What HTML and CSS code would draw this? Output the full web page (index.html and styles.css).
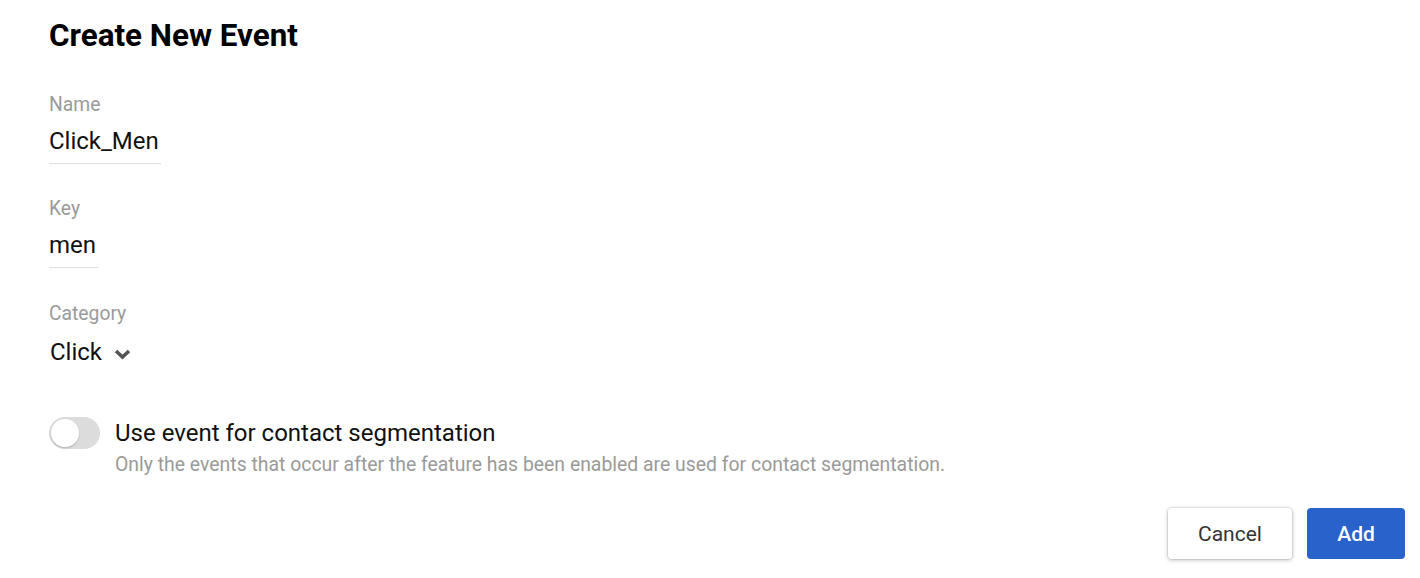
FILE: index.html
```html
<!DOCTYPE html>
<html>
<head>
<meta charset="utf-8">
<link rel="stylesheet" href="styles.css">
</head>
<body>
<div class="dialog">
  <h1 class="title">Create New Event</h1>
  <div class="field">
    <div class="label">Name</div>
    <div class="value underline">Click_Men</div>
  </div>
  <div class="field">
    <div class="label">Key</div>
    <div class="value underline">men</div>
  </div>
  <div class="field field-cat">
    <div class="label">Category</div>
    <div class="select">
      <span class="select-text">Click</span>
      <svg class="chev" width="17" height="12" viewBox="0 0 17 12"><path d="M2 3 L8.5 9 L15 3" fill="none" stroke="#555" stroke-width="3.6"/></svg>
    </div>
  </div>
  <div class="toggle-row">
    <div class="switch"><div class="knob"></div></div>
    <div class="toggle-text">
      <div class="toggle-label">Use event for contact segmentation</div>
      <div class="toggle-help">Only the events that occur after the feature has been enabled are used for contact segmentation.</div>
    </div>
  </div>
  <div class="actions">
    <button class="btn btn-cancel">Cancel</button>
    <button class="btn btn-add">Add</button>
  </div>
</div>
</body>
</html>
```
FILE: styles.css
```css
html, body {
  margin: 0;
  padding: 0;
  background: #fff;
  font-family: Roboto, "Noto Sans", sans-serif;
  color: #111;
}
.dialog {
  width: 1420px;
  height: 578px;
  box-sizing: border-box;
  padding: 17px 15px 0 49px;
  display: flex;
  flex-direction: column;
}
.title {
  margin: 0;
  font-size: 31.4px;
  font-weight: 700;
  line-height: 38px;
  color: #000;
}
.field {
  display: flex;
  flex-direction: column;
  align-items: flex-start;
}
.title + .field { margin-top: 37px; }
.field + .field { margin-top: 32px; }
.field-cat { margin-top: 33px !important; }
.label {
  font-size: 19.3px;
  line-height: 26px;
  color: #9a9a9a;
}
.value {
  font-size: 24px;
  line-height: 32px;
  margin-top: 7px;
  color: #111;
  padding-right: 2px;
}
.underline {
  border-bottom: 1px solid #ddd;
  padding-bottom: 6px;
}
.select {
  display: flex;
  align-items: center;
  margin-top: 9px;
  padding-left: 1px;
}
.select-text {
  font-size: 24px;
  line-height: 32px;
}
.chev {
  margin-left: 12px;
  margin-top: 4px;
}
.toggle-row {
  display: flex;
  align-items: flex-start;
  margin-top: 49px;
}
.switch {
  width: 51px;
  height: 32px;
  border-radius: 16px;
  background: #dcdcdc;
  position: relative;
  flex: none;
}
.knob {
  position: absolute;
  left: 2px;
  top: 2px;
  width: 28px;
  height: 28px;
  border-radius: 50%;
  background: #fff;
  box-shadow: 0 1px 2px rgba(0,0,0,0.2);
}
.toggle-text {
  margin-left: 15px;
}
.toggle-label {
  font-size: 24px;
  line-height: 32px;
  color: #111;
}
.toggle-help {
  font-size: 19.4px;
  line-height: 26px;
  color: #9a9a9a;
  margin-top: 3px;
}
.actions {
  display: flex;
  justify-content: flex-end;
  gap: 15px;
  margin-top: 30px;
}
.btn {
  height: 51px;
  border-radius: 4px;
  font-family: Roboto, sans-serif;
  font-size: 21px;
  border: none;
  cursor: pointer;
}
.btn-cancel {
  width: 124px;
  background: #fff;
  color: #333;
  box-shadow: 0 0 0 1px rgba(0,0,0,0.06), 0 1px 4px rgba(0,0,0,0.28);
}
.btn-add {
  width: 98px;
  background: #2a62cc;
  color: #fff;
  font-weight: 500;
}
```
